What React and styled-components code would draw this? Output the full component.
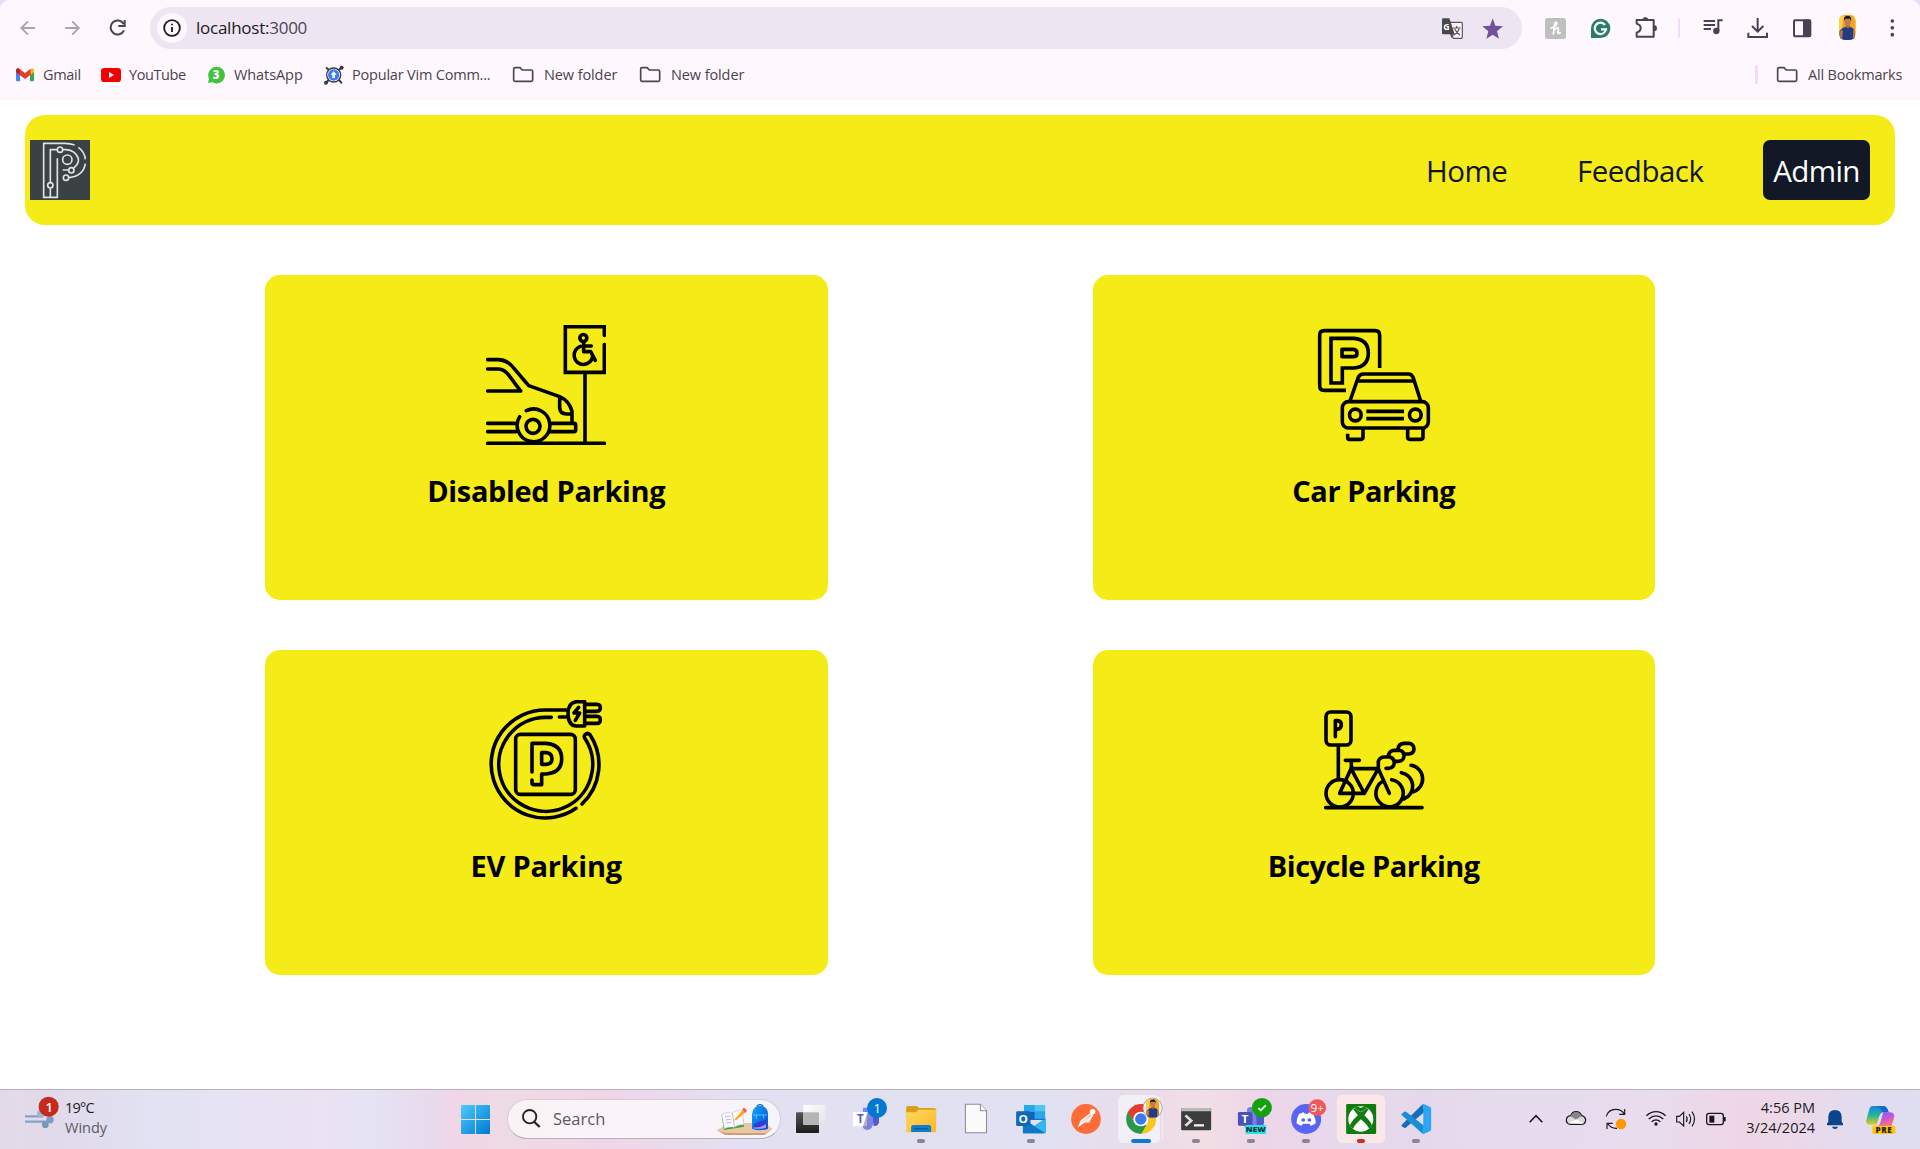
import React from 'react';
import styled, { createGlobalStyle } from 'styled-components';

const GlobalStyle = createGlobalStyle`
  *, *::before, *::after { box-sizing: border-box; }
  html, body { margin: 0; padding: 0; background: #fff; }
  body {
    font-family: "Open Sans", "Noto Sans", sans-serif;
    color: #000;
    overflow: hidden;
  }
  svg { display: block; flex: none; }
  svg text { font-family: "Open Sans", "Noto Sans", sans-serif; }
`;

const Screen = styled.div`
  width: 1920px;
  height: 1149px;
  display: flex;
  flex-direction: column;
`;

/* ---------- Browser chrome ---------- */

const Browser = styled.header`
  flex: none;
  height: 100px;
  background: #ecdaf8;
`;

const BrowserSurface = styled.div`
  height: 100%;
  background: #fef7fd;
  border-radius: 9px 9px 0 0;
`;

const Toolbar = styled.div`
  height: 56px;
  display: flex;
  align-items: center;
  padding-left: 5px;
`;

const AddressBar = styled.div`
  flex: none;
  width: 1372px;
  height: 42px;
  margin: 0 11px 0 10px;
  padding: 0 10px 0 7px;
  display: flex;
  align-items: center;
  border-radius: 21px;
  background: #ede5f2;
`;

const SiteInfo = styled.div`
  width: 30px;
  height: 30px;
  border-radius: 50%;
  background: #fef7fd;
  display: grid;
  place-items: center;
`;

const Address = styled.div`
  flex: 1;
  padding-left: 9px;
  font-size: 17px;
  letter-spacing: -0.25px;
  line-height: 24px;
  color: #4d4554;
  span { color: #1e1a22; }
`;

const BookmarksBar = styled.nav`
  height: 37px;
  display: flex;
  align-items: center;
  padding: 0 18px 0 12px;
`;

const Bookmark = styled.div`
  flex: none;
  width: ${(p) => p.$width}px;
  display: flex;
  align-items: center;
  font-size: 14.5px;
  letter-spacing: ${(p) => p.$track || 0}px;
  line-height: 20px;
  color: #4a434e;
  white-space: nowrap;
`;

const BookmarkDivider = styled.div`
  width: 3px;
  height: 19px;
  margin: 0 15px 0 auto;
  border-radius: 2px;
  background: #f0dbff;
`;

/* ---------- Page ---------- */

const Page = styled.main`
  flex: 1;
  padding: 15px 25px 0;
`;

const Navbar = styled.nav`
  height: 110px;
  display: flex;
  align-items: center;
  justify-content: space-between;
  padding: 0 25px 0 5px;
  border-radius: 20px;
  background: #f5eb17;
`;

const NavLinks = styled.div`
  display: flex;
  align-items: center;
`;

const NavLink = styled.a`
  width: ${(p) => p.$width}px;
  padding: 1px 0 0 1px;
  font-size: 29.5px;
  letter-spacing: -0.5px;
  line-height: 45px;
  color: #101521;
`;

const AdminButton = styled.button`
  width: 107px;
  height: 60px;
  padding: 1px 0 0;
  border: 0;
  border-radius: 7px;
  background: #121826;
  color: #fff;
  font: inherit;
  font-size: 29.5px;
  letter-spacing: -0.6px;
  line-height: 45px;
`;

const CardGrid = styled.section`
  display: grid;
  grid-template-columns: 562.5px 562.5px;
  grid-auto-rows: 325px;
  gap: 50px 265px;
  justify-content: center;
  padding-top: 50px;
`;

const Card = styled.article`
  display: flex;
  flex-direction: column;
  align-items: center;
  padding-top: 50px;
  border-radius: 15px;
  background: #f5eb17;
`;

const CardTitle = styled.h2`
  margin: 23px 0 0;
  font-size: 29px;
  font-weight: 700;
  letter-spacing: ${(p) => p.$track}px;
  line-height: 45px;
`;

const LineArt = styled.svg`
  fill: none;
  stroke: #000;
  stroke-width: 10.8;
  stroke-linecap: round;
  stroke-linejoin: round;
`;

/* ---------- Taskbar ---------- */

const Taskbar = styled.footer`
  flex: none;
  height: 60px;
  display: flex;
  align-items: stretch;
  border-top: 1px solid #b5b0be;
  background: linear-gradient(90deg, #e3dae9 0, #e1daea 60px, #e1e2f3 150px, #e7e3f4 250px, #ebe2f3 320px,
    #e5e3f4 370px, #e7dbed 430px, #f0d6e8 455px, #eedae4 500px, #efd6e8 610px, #e3e0f1 730px, #e0e1f2 1050px,
    #ecdbe9 1150px, #f2dfe5 1200px, #ecd5e9 1265px, #e7d8eb 1340px, #e6d8ec 1430px, #e6dced 1500px, #e8dced 1660px,
    #efd6e6 1745px, #e9d9ea 1810px, #e1ddf0 1870px, #e0def1 1920px);
`;

const Weather = styled.div`
  flex: none;
  width: 446px;
  display: flex;
  padding-left: 20px;
`;

const TwoLines = styled.div`
  padding-top: 8px;
  font-size: 14.5px;
  line-height: 20px;
  text-align: ${(p) => p.$align || 'left'};
  color: #1c1a1e;
  white-space: nowrap;
`;

const Temperature = styled.div`
  letter-spacing: -0.8px;
`;

const Muted = styled.div`
  color: #5d5a62;
`;

const SearchBox = styled.div`
  flex: none;
  width: 274px;
  height: 40px;
  margin: 9px 2px 0 0;
  display: flex;
  align-items: center;
  border: 1px solid #d9cbd8;
  border-bottom-color: #b8adba;
  border-radius: 20px;
  background: linear-gradient(90deg, #faf3f6, #faf4f9 60%, #f6f4fb);
  font-size: 16.5px;
  color: #5c585e;
  span { flex: 1; padding-bottom: 1px; }
`;

const AppSlot = styled.div`
  flex: none;
  position: relative;
  width: 55px;
  height: 59px;
`;

const ActiveTile = styled.div`
  position: absolute;
  left: ${(p) => p.$left}px;
  top: 4px;
  width: ${(p) => p.$width}px;
  height: 50px;
  border: 1px solid #e6dbe8;
  border-radius: 6px;
  background: ${(p) => p.$color};
`;

const AppIcon = styled.svg`
  position: relative;
`;

const Tray = styled.div`
  flex: 1;
  display: flex;
  align-items: stretch;
  justify-content: flex-end;
`;

const Clock = styled(TwoLines)`
  flex: none;
  width: 85px;
`;

/* ---------- Toolbar icons ---------- */

const ink = '#4c4152';

function ToolIcon({ box, width = 45, height = 56, children }) {
  return <svg width={width} height={height} viewBox={box}>{children}</svg>;
}

function BackForward({ forward }) {
  return (
    <ToolIcon box="15 0 135 168">
      <path transform={forward ? 'translate(165.5 0) scale(-1 1)' : undefined} d="M105 84H64M84 64L64 84L84 104" fill="none" stroke="#aaa3ad" strokeWidth="5.5" />
    </ToolIcon>
  );
}

function Reload() {
  return (
    <ToolIcon box="285 0 135 168">
      <path d="M371 72A21 21 0 1 0 372 91" fill="none" stroke={ink} strokeWidth="6" />
      <path d="M374 60V78H355" fill="none" stroke={ink} strokeWidth="6" />
    </ToolIcon>
  );
}

function Info() {
  return (
    <svg width="18" height="18" viewBox="0 0 54 54">
      <circle cx="27" cy="27" r="23.5" fill="none" stroke="#1e1a22" strokeWidth="5.5" />
      <path d="M27 24V39M27 14V19" stroke="#1e1a22" strokeWidth="5.5" />
    </svg>
  );
}

function Translate() {
  return (
    <ToolIcon box="96 27 120 114" width={40} height={38}>
      <path d="M142 67H184Q187 67 187 70V112Q187 115 184 115H161L151 101" fill="#fef7fd" stroke="#58535b" strokeWidth="3.5" />
      <path d="M130 55H148L164 103H130Q126 103 126 99V59Q126 55 130 55Z" fill="#4a464d" />
      <text x="130" y="91" fontSize="26" fontWeight="700" fill="#fff">G</text>
      <path d="M158 84H182M170 78V84M164 87Q170 99 180 105M178 86Q173 99 161 106" fill="none" stroke="#58535b" strokeWidth="3.5" />
      <path d="M151 103H163L154 115Z" fill="#58535b" />
    </ToolIcon>
  );
}

function Star() {
  return (
    <ToolIcon box="216 27 120 114" width={40} height={38}>
      <path d="M278 55L286 77L309 79L291 94L297 116L278 104L259 116L265 94L247 79L270 77Z" fill="#71509a" />
    </ToolIcon>
  );
}

function Honey() {
  return (
    <ToolIcon box="399 0 135 168">
      <rect x="435" y="54" width="63" height="63" rx="8" fill="#bfbfbf" />
      <path d="M453 84Q469 80 471 70Q468 62 464 71L460 102M461 93Q470 81 475 84Q477 88 473 97Q473 103 481 98" fill="none" stroke="#fff" strokeWidth="5" strokeLinecap="round" strokeLinejoin="round" />
    </ToolIcon>
  );
}

function Grammarly() {
  return (
    <ToolIcon box="534 0 135 168">
      <path d="M573 114V86A29 29 0 1 1 602 114Z" fill="#2a7d6b" />
      <path d="M615 75A17 17 0 1 0 618 88H603" fill="none" stroke="#fff" strokeWidth="6.5" />
      <path d="M614 84L621 88L615 95" fill="#fff" />
    </ToolIcon>
  );
}

function Puzzle() {
  return (
    <ToolIcon box="669 0 135 168">
      <path d="M710 60H761V110H710V98Q722 94 722 84Q722 75 710 71Z" fill="none" stroke={ink} strokeWidth="6" strokeLinejoin="round" />
      <path d="M728 60A8 8 0 0 1 744 60ZM762 76A8 8 0 0 1 762 93Z" fill={ink} stroke={ink} strokeWidth="1" />
    </ToolIcon>
  );
}

function ToolbarSeparator() {
  return <ToolIcon box="804 0 66 168" width={22}><rect x="834" y="54" width="6" height="60" rx="3" fill="#f0dbff" /></ToolIcon>;
}

function Queue() {
  return (
    <ToolIcon box="870 0 135 168">
      <path d="M911 63H945M911 75H945M911 87H933M955 93V61H968" fill="none" stroke={ink} strokeWidth="6" />
      <circle cx="949" cy="93" r="9.5" fill={ink} />
    </ToolIcon>
  );
}

function Download() {
  return (
    <ToolIcon box="1005 0 135 168">
      <path d="M1073 54V94M1056 78L1073 95L1090 78M1045 98V111H1101V98" fill="none" stroke={ink} strokeWidth="6" />
    </ToolIcon>
  );
}

function SidePanel() {
  return (
    <ToolIcon box="1140 0 135 168">
      <rect x="1182" y="61" width="49" height="48" rx="3" fill="none" stroke={ink} strokeWidth="6" />
      <path d="M1209 59H1231V111H1209Z" fill={ink} />
    </ToolIcon>
  );
}

function Portrait({ id }) {
  return (
    <g>
      <clipPath id={id}><rect x="3" y="0" width="50" height="76" rx="18" /></clipPath>
      <g clipPath={`url(#${id})`}>
        <rect width="56" height="76" fill="#f2a51d" />
        <path d="M0 0H18L10 50H0ZM43 0H56V30Z" fill="#ffcf4a" />
        <path d="M5 76V49Q14 37 24 36H35Q48 38 50 54V76Z" fill="#203c83" />
        <path d="M5 48L15 47L12 76H5ZM45 46L51 52V76H45Z" fill="#b8714b" />
        <path d="M23 28H36V38Q30 43 23 38Z" fill="#a96745" />
        <ellipse cx="29" cy="20" rx="9" ry="14" fill="#bd7c56" />
        <path d="M18 19Q16 3 30 3Q42 4 39 20L36 12H22Z" fill="#161c27" />
      </g>
    </g>
  );
}

function Avatar() {
  return (
    <ToolIcon box="1275 0 135 168">
      <circle cx="1343" cy="83" r="38" fill="#fff" />
      <g transform="translate(1314 44)"><Portrait id="profilePhoto" /></g>
    </ToolIcon>
  );
}

function Dots() {
  return (
    <ToolIcon box="1410 0 135 168">
      <g fill={ink}><circle cx="1477" cy="63" r="5.5" /><circle cx="1477" cy="83.5" r="5.5" /><circle cx="1477" cy="104" r="5.5" /></g>
    </ToolIcon>
  );
}

/* ---------- Bookmark icons ---------- */

function GmailIcon() {
  return (
    <svg width="31" height="24" viewBox="36 189 93 72">
      <path d="M48 211V240Q48 244 52 244H60V217Z" fill="#4285f4" />
      <path d="M102 211V240Q102 244 98 244H90V217Z" fill="#34a853" />
      <path d="M90 210L93 206Q102 201 102 212V216L90 226Z" fill="#fbbc04" />
      <path d="M48 212Q49 201 58 206L75 219L92 206V224L75 237L58 224L48 216Z" fill="#e33e2f" />
      <path d="M48 212Q49 202 58 206L60 208V225L48 216Z" fill="#c5221f" />
    </svg>
  );
}

function YouTubeIcon() {
  return (
    <svg width="31" height="24" viewBox="294 189 93 72">
      <rect x="303" y="204" width="60" height="42" rx="10" fill="#f50000" />
      <path d="M327 216V234L342 225Z" fill="#fff" />
    </svg>
  );
}

function WhatsAppIcon() {
  return (
    <svg width="30" height="24" viewBox="612 189 90 72">
      <path d="M624 249L627 236A25 25 0 1 1 637 247Z" fill="#43c23c" />
      <text x="638" y="238" fontSize="34" fontWeight="800" fill="#fff">3</text>
    </svg>
  );
}

function VimIcon() {
  return (
    <svg width="32" height="24" viewBox="960 189 96 72">
      <path d="M978 248L1025 202M980 204L991 214M1024 248L1014 237" stroke="#353b43" strokeWidth="6" strokeLinecap="round" />
      <circle cx="1025" cy="203" r="6" fill="#353b43" /><circle cx="978" cy="248" r="6" fill="#353b43" />
      <circle cx="1001" cy="225" r="21" fill="#fff" stroke="#353b43" strokeWidth="4" />
      <circle cx="1001" cy="225" r="17" fill="#3f7df0" />
      <path d="M1001 214L1010 224H1005V234H997V224H992Z" fill="#fff" />
    </svg>
  );
}

function FolderIcon() {
  return (
    <svg width="35" height="24" viewBox="0 189 105 72">
      <path d="M18 203H33L40 210H67Q71 210 71 214V240Q71 244 67 244H18Q14 244 14 240V207Q14 203 18 203Z" fill="none" stroke="#4d454f" strokeWidth="5" />
    </svg>
  );
}

/* ---------- Page icons ---------- */

function Logo() {
  return (
    <svg width="60" height="60" viewBox="90 420 180 180">
      <path d="M90 420H270V600H90Z" fill="#3c4144" />
      <g fill="none" stroke="#dde3e5" strokeWidth="5">
        <path d="M224 435Q210 430 195 430H131V592H172V475" />
        <path d="M151 546V449H171M151 565V592M189 449H198Q226 451 235 475Q238 490 221 504" />
        <path d="M235 442Q254 455 256 478M256 491Q250 528 207 533M188 510H207" />
        <circle cx="180" cy="449" r="8" /><circle cx="202" cy="479" r="14" />
        <circle cx="214" cy="511" r="8" /><circle cx="198" cy="533" r="8" /><circle cx="151" cy="556" r="8" />
      </g>
    </svg>
  );
}

function DisabledParkingIcon() {
  return (
    <LineArt width="120" height="120" viewBox="78 75 360 360">
      <path d="M83 179H115Q143 180 162 205L206 257L299 290Q328 303 336 334V366M83 207H116Q133 208 145 224L182 273H83M299 292V323Q300 342 320 342H335" />
      <path d="M83 370H165M275 370H342Q347 370 347 375V390Q347 395 342 395H270M83 395H168M83 430H433M375 220V428" />
      <path d="M199 332A49 49 0 1 1 179 350" />
      <circle cx="219" cy="379" r="21" />
      <path d="M433 106V80H316V217H433V134" strokeLinejoin="miter" />
      <circle cx="370" cy="114" r="10.5" />
      <path d="M361 139A28 28 0 1 0 398 170M371 129V155H392L406 181M371 138H394" />
    </LineArt>
  );
}

const SquareCaps = styled.g`
  stroke-linecap: butt;
`;

function CarParkingIcon() {
  return (
    <LineArt width="120" height="120" viewBox="132 75 360 360">
      <SquareCaps>
        <path d="M329 204V106Q329 92 315 92H163Q149 92 149 106V257Q149 271 163 271H228" />
        <path d="M183 115H252Q295 119 295 159Q295 200 252 204H217V249H183Z" strokeLinejoin="miter" />
        <path d="M216 148H250Q261 149 261 159.5Q261 170 250 170H216Z" />
        <path d="M239 306L264 234Q269 222 280 222H415Q426 222 430 234L453 306M264 243H430" />
        <rect x="217" y="305" width="258" height="79" rx="18" />
        <circle cx="256" cy="345" r="17.5" /><circle cx="436" cy="345" r="17.5" />
        <path d="M289 334H402M289 356H402" />
        <path d="M233 401V413Q233 418 238 418H273Q279 418 279 412V384M413 384V412Q413 418 419 418H453Q459 418 459 412V384" />
      </SquareCaps>
    </LineArt>
  );
}

function EvParkingIcon() {
  return (
    <LineArt width="120" height="120" viewBox="109 60 360 360">
      <path d="M352 90H287A162 162 0 1 0 379 385M397 372A163 163 0 0 0 421 164Q414 157 406 164Q402 168 405 174A141 141 0 1 1 287 112H305M329 111H350" />
      <rect x="198" y="163" width="179" height="180" rx="14" />
      <path d="M247 276V190H289Q336 194 336 236Q336 279 289 282H276V314H252Q247 314 247 309V300" />
      <path d="M276 218V253H289Q307 252 307 236Q307 219 289 218Z" />
      <path d="M405 65H380Q355 68 355 101Q356 138 380 138H405ZM411 73H442Q452 74 452 83Q452 93 442 94H411M411 109H442Q452 110 452 119Q452 130 442 130H411" />
      <path d="M387 82L373 99H390L377 121" />
    </LineArt>
  );
}

function BicycleParkingIcon() {
  return (
    <LineArt width="120" height="120" viewBox="162 60 360 360">
      <rect x="198" y="96" width="75" height="99" rx="14" />
      <path d="M226 170V122H232Q244 123 244 134Q244 146 232 148H228" />
      <path d="M235 198V296M256 241H298M274 243V265M197 383H486" />
      <circle cx="239" cy="340" r="41" />
      <path d="M239 340H313L355 266H273ZM273 266L313 340M355 266L388 340M370 303A41 41 0 1 0 395 299" />
      <path d="M355 266V244Q359 231 374 231H390Q402 235 403 247Q402 263 387 265H378M384 230Q387 213 402 211H419Q432 214 432 228Q431 243 415 244H403M413 210Q415 191 431 190H447Q461 192 462 207Q461 221 446 222H430" />
      <path d="M424 278A41 41 0 0 1 431 357M453 256A41 41 0 0 1 458 336" />
    </LineArt>
  );
}

/* ---------- Taskbar icons ---------- */

function WeatherIcon() {
  return (
    <svg width="45" height="59" viewBox="60 30 135 177">
      <g stroke="#83a3c5" strokeWidth="7" fill="none"><path d="M75 109H128M75 125H142" /></g>
      <circle cx="123" cy="101" r="12" fill="#9cb7d3" /><circle cx="150" cy="119" r="11" fill="#7b9dc1" /><circle cx="136" cy="134" r="10" fill="#7598be" />
      <circle cx="146" cy="80" r="30" fill="#c52b1d" />
      <text x="148" y="95" fontSize="39" fontWeight="600" textAnchor="middle" fill="#fff">1</text>
    </svg>
  );
}

function StartIcon() {
  return (
    <svg width="61" height="59" viewBox="18 30 183 177">
      <defs><linearGradient id="start" x1="0" y1="0" x2="1" y2="1"><stop stopColor="#4cccfb" /><stop offset="1" stopColor="#0078d4" /></linearGradient></defs>
      <path d="M66 75H105V117H63V78Q63 75 66 75ZM108 75H147Q150 75 150 78V117H108ZM63 120H105V162H66Q63 162 63 159ZM108 120H150V159Q150 162 147 162H108Z" fill="url(#start)" />
    </svg>
  );
}

function SearchGlyph() {
  return (
    <svg width="45" height="38" viewBox="204 63 135 114">
      <circle cx="269" cy="113" r="20" fill="none" stroke="#242124" strokeWidth="5.5" />
      <path d="M283 129L299 144" stroke="#242124" strokeWidth="7" />
    </svg>
  );
}

function SearchArt() {
  return (
    <svg width="68" height="38" viewBox="819 63 204 114">
      <defs><linearGradient id="bag" x1="0" y1="0" x2="1" y2="1"><stop stopColor="#10a7ff" /><stop offset="1" stopColor="#064bd0" /></linearGradient></defs>
      <path d="M833 153L874 132H980L1001 150L976 163H862Z" fill="#e9c8a0" /><path d="M833 153L862 162H978L1001 150L976 168H858Z" fill="#cba079" />
      <path d="M848 109L855 153L915 143L909 98Z" fill="#3d9c45" />
      <path d="M848 106Q870 96 880 103Q890 92 910 96L915 137Q897 136 887 145Q872 141 856 149Z" fill="#fafafa" stroke="#b7aebc" strokeWidth="1.5" />
      <path d="M880 103L887 145M858 114L875 111M860 123L877 120M861 132L878 129" stroke="#9e9bb1" strokeWidth="2" />
      <path d="M883 125L912 92L921 99L893 122Z" fill="#fea52b" /><path d="M909 91L915 86L924 94L919 101Z" fill="#f45b59" />
      <path d="M954 83Q955 77 963 77Q971 77 972 83" fill="none" stroke="#0964c9" strokeWidth="4" />
      <path d="M939 105Q943 80 963 80Q985 81 987 104V149Q963 158 939 149Z" fill="url(#bag)" />
      <path d="M942 108H984M952 108V119M974 108V119" stroke="#66ccff" strokeWidth="2.5" />
      <path d="M944 137Q953 128 981 123V145Q962 151 944 145Z" fill="#2c3fd1" /><path d="M944 145Q962 148 981 135V146Q962 152 944 148Z" fill="#b78bff" />
    </svg>
  );
}

function AppGlyph({ x, span = 154, children }) {
  return <AppIcon width="55" height="59" viewBox={`${x} 30 ${span} 177`} preserveAspectRatio="none">{children}</AppIcon>;
}

function Running({ x, color = '#8b8590', width = 23 }) {
  return <rect x={x - width / 2} y="177" width={width} height="12" rx="6" fill={color} />;
}

function TaskViewIcon() {
  return (
    <AppGlyph x="1032" span={165}>
      <defs>
        <linearGradient id="tvDark" x1="0" y1="0" x2="0" y2="1"><stop stopColor="#555" /><stop offset="1" stopColor="#1c1c1c" /></linearGradient>
        <linearGradient id="tvLight" x1="0" y1="0" x2="1" y2="1"><stop stopColor="#fff" /><stop offset="1" stopColor="#e4e1e4" /></linearGradient>
      </defs>
      <rect x="1071" y="97" width="69" height="62" rx="2" fill="url(#tvDark)" />
      <rect x="1093" y="75" width="67" height="60" rx="2" fill="url(#tvLight)" />
      <path d="M1093 97H1140V135H1093Z" fill="#b6b4b6" />
    </AppGlyph>
  );
}

function TeamsIcon() {
  return (
    <AppGlyph x="1197" span={165}>
      <path d="M1298 100H1320V127Q1318 139 1304 138Z" fill="#5059c9" /><path d="M1272 83H1302V133Q1298 150 1285 150Q1272 148 1270 138Z" fill="#7b83eb" />
      <rect x="1242" y="96" width="43" height="43" fill="#fff" />
      <path d="M1285 98L1288 140H1272Z" fill="#4e5078" opacity=".45" />
      <text x="1264" y="130" fontSize="35" fontWeight="700" textAnchor="middle" fill="#5059c9">T</text>
      <circle cx="1314" cy="84" r="30" fill="#0078d4" />
      <text x="1315" y="99" fontSize="39" textAnchor="middle" fill="#fff">1</text>
    </AppGlyph>
  );
}

function ExplorerIcon() {
  return (
    <AppGlyph x="-16.8">
      <defs><linearGradient id="folder" x1="0" y1="0" x2="1" y2="1"><stop stopColor="#ffda61" /><stop offset="1" stopColor="#f8b728" /></linearGradient></defs>
      <path d="M20 83Q20 78 25 78H49L56 84H98Q104 84 104 90V115H20Z" fill="#dba012" />
      <path d="M20 97H47L55 89H104V153Q104 157 100 157H20Z" fill="url(#folder)" />
      <path d="M34 156V141Q34 135 40 135H84Q90 135 90 141V156Z" fill="#0f7dcb" /><path d="M43 146H81" stroke="#0b5795" strokeWidth="3.5" />
      <Running x={61.5} />
    </AppGlyph>
  );
}

function FileIcon() {
  return (
    <AppGlyph x="137.2">
      <path d="M186 73H228L245 92V158H186Z" fill="#fafafa" stroke="#918c96" strokeWidth="3" /><path d="M228 73V92H245" fill="#fff" stroke="#918c96" strokeWidth="3" />
    </AppGlyph>
  );
}

function OutlookIcon() {
  return (
    <AppGlyph x="291.2">
      <path d="M350 75H409V120H350Z" fill="#1b6fc1" />
      <path d="M350 75H379V96H350ZM379 96H409V116H379Z" fill="#28a8e8" /><path d="M379 75H409V95H379Z" fill="#4dc7f5" /><path d="M350 96H379V117H350Z" fill="#0f63b3" />
      <path d="M347 117L379 138L411 115V157Q411 160 406 160H347Z" fill="#198ad8" /><path d="M347 159L411 117V160Z" fill="#35b8f1" /><path d="M347 117L408 158L402 160H347Z" fill="#1178c8" />
      <rect x="328" y="94" width="40" height="44" rx="4" fill="#0f67b8" />
      <text x="348" y="129" fontSize="33" fontWeight="700" textAnchor="middle" fill="#fff">O</text>
      <Running x={369.5} />
    </AppGlyph>
  );
}

function PostmanIcon() {
  return (
    <AppGlyph x="445.2">
      <ellipse cx="523.5" cy="117" rx="41.5" ry="45" fill="#fe6c37" />
      <circle cx="542" cy="95" r="8" fill="#fff" />
      <path d="M537 98L544 105L533 127L518 129L500 143L509 121Z" fill="#fff" /><path d="M537 103L511 128M537 105L518 130" stroke="#e8734a" strokeWidth="1.5" />
    </AppGlyph>
  );
}

function ChromeIcon() {
  return (
    <AppGlyph x="599.2">
      <clipPath id="chromeClip"><ellipse cx="678" cy="117" rx="42" ry="45" /></clipPath>
      <g clipPath="url(#chromeClip)">
        <path d="M630 70H725V98H678L660 128L636 92Z" fill="#e33b2e" />
        <path d="M636 88L660 129Q668 139 680 137L696 134L676 166H630Z" fill="#279a49" />
        <path d="M678 98H725V170H675L697 127Q701 112 690 98Z" fill="#fcc61d" />
      </g>
      <ellipse cx="677" cy="117" rx="21" ry="22" fill="#fff" /><ellipse cx="677" cy="117" rx="16" ry="17.5" fill="#3a79ea" />
      <ellipse cx="710" cy="84" rx="27" ry="30" fill="#f6f3f6" stroke="#92867f" strokeWidth="2" />
      <g transform="translate(690 56) scale(.72 .75)"><Portrait id="profileBadge" /></g>
      <Running x={678} width={56} color="#0a78d4" />
    </AppGlyph>
  );
}

function TerminalIcon() {
  return (
    <AppGlyph x="753.2">
      <rect x="790" y="84" width="84" height="67" rx="4" fill="#3d3d3d" /><path d="M790 94V88Q790 84 794 84H870Q874 84 874 88V94Z" fill="#b9b9b9" />
      <path d="M802 106L818 122L802 137" fill="none" stroke="#ddd" strokeWidth="8" /><path d="M826 136H854" stroke="#eee" strokeWidth="7" />
      <Running x={831.5} />
    </AppGlyph>
  );
}

function TeamsNewIcon() {
  return (
    <AppGlyph x="907.2">
      <path d="M965 101H1004V148H980Q965 145 965 125Z" fill="#7a7fe4" /><path d="M1000 108H1022V129Q1020 142 1002 142Z" fill="#5059c9" />
      <circle cx="985" cy="92" r="11" fill="#777de3" />
      <path d="M988 101V137" stroke="#3b419c" strokeWidth="3" />
      <rect x="949" y="96" width="39" height="41" rx="4" fill="#4851b8" />
      <text x="968.5" y="128" fontSize="33" fontWeight="700" textAnchor="middle" fill="#fff">T</text>
      <ellipse cx="1016" cy="83" rx="28" ry="29" fill="#13a10e" /><path d="M1006 84L1013 91L1027 76" fill="none" stroke="#fff" strokeWidth="5" />
      <rect x="970" y="135" width="58" height="27" rx="3" fill="#23e5e5" />
      <text x="999" y="157" fontSize="23" fontWeight="800" textAnchor="middle" fill="#092f32">NEW</text>
      <Running x={985.5} />
    </AppGlyph>
  );
}

function DiscordIcon() {
  return (
    <AppGlyph x="1061.2">
      <ellipse cx="1140" cy="117" rx="42" ry="45" fill="#5865f2" />
      <path d="M1120 102L1133 97L1136 101H1145L1149 97L1160 102Q1167 116 1167 130Q1160 135 1153 137L1149 131H1131L1127 137Q1119 135 1113 130Q1113 114 1120 102Z" fill="#fff" />
      <circle cx="1132" cy="120" r="5.5" fill="#5865f2" /><circle cx="1149" cy="120" r="5.5" fill="#5865f2" />
      <circle cx="1171" cy="83" r="25" fill="#f0595b" />
      <text x="1171" y="95" fontSize="33" textAnchor="middle" fill="#fff">9+</text>
      <Running x={1139.5} />
    </AppGlyph>
  );
}

function XboxIcon() {
  return (
    <AppGlyph x="1215.2">
      <rect x="1252" y="72" width="84" height="90" rx="4" fill="#107c10" />
      <clipPath id="xbox"><ellipse cx="1293" cy="117" rx="35" ry="38" /></clipPath>
      <g clipPath="url(#xbox)"><rect x="1255" y="75" width="78" height="84" fill="#fff" />
        <path d="M1269 83Q1279 85 1293 97Q1308 85 1318 83L1303 106Q1324 127 1329 148L1319 151Q1311 133 1293 118Q1277 133 1268 151L1258 148Q1263 126 1285 106Z" fill="#107c10" />
        <path d="M1271 82Q1282 78 1293 84Q1304 78 1315 82L1293 96Z" fill="#107c10" />
      </g>
      <Running x={1293.5} color="#cf2c22" />
    </AppGlyph>
  );
}

function CodeIcon() {
  return (
    <AppGlyph x="1369.2">
      <path d="M1408 134L1466 73L1471 96L1418 144Q1414 145 1408 139Q1405 136 1408 134Z" fill="#146eb8" />
      <path d="M1408 101L1415 95Q1417 93 1421 96L1471 138L1466 161L1408 106Q1405 103 1408 101Z" fill="#1990d6" />
      <path d="M1462 76L1469 72L1486 80Q1490 82 1490 86V148Q1490 152 1486 154L1469 162L1462 158Q1468 158 1468 151V83Q1468 75 1462 76Z" fill="#2aa6f2" />
      <Running x={1447.5} />
    </AppGlyph>
  );
}

function TrayIcon({ x, width, children }) {
  return <svg width={width} height="59" viewBox={`${x} 30 ${width * 3} 177`} fill="none" stroke="#1b191d" strokeWidth="4">{children}</svg>;
}

function CloudShape() {
  return (
    <TrayIcon x={228} width={40}>
      <path d="M272 133Q259 132 259 120Q260 108 272 107Q277 95 288 95Q300 95 305 107Q317 110 317 122Q315 133 304 133Z" fill="#d9d9d9" />
      <path d="M272 108Q277 96 288 96Q300 96 304 108L288 119Z" fill="#858585" stroke="none" />
      <path d="M262 130L290 118L312 131Z" fill="#fafafa" stroke="none" />
    </TrayIcon>
  );
}

function SyncIcon() {
  return (
    <TrayIcon x={348} width={40}>
      <path d="M379 109Q385 88 407 88Q425 88 433 102M434 87V103H418M381 147V130H398M384 132Q393 146 411 145" strokeWidth="3.5" />
      <circle cx="423" cy="132" r="15.5" fill="#ff9800" stroke="none" />
    </TrayIcon>
  );
}

function WifiIcon() {
  return (
    <TrayIcon x={468} width={40}>
      <path d="M499 107Q528 83 557 107M506 117Q528 98 550 117M515 125Q528 114 541 125" />
      <circle cx="528" cy="132" r="5" fill="#1b191d" stroke="none" />
    </TrayIcon>
  );
}

function SpeakerIcon() {
  return (
    <TrayIcon x={588} width={30}>
      <path d="M590 109H598L611 97V138L598 126H590ZM619 109Q624 117 619 126M627 102Q637 117 627 132M636 95Q651 117 636 139" strokeWidth="3.5" />
    </TrayIcon>
  );
}

function BatteryIcon() {
  return (
    <TrayIcon x={678} width={24}>
      <rect x="680" y="100" width="50" height="34" rx="7" /><path d="M688 107H703V128H688Z" fill="#1b191d" stroke="none" /><path d="M734 111V124" strokeWidth="6" />
    </TrayIcon>
  );
}

function BellIcon() {
  return (
    <TrayIcon x={1005} width={45}>
      <path d="M1041 136V130L1045 126V109Q1047 90 1065 90Q1083 90 1085 109V126L1089 130V136ZM1056 140H1074Q1072 147 1065 147Q1058 147 1056 140Z" fill="#0a438e" stroke="none" />
    </TrayIcon>
  );
}

function CopilotIcon() {
  return (
    <TrayIcon x={1140} width={60}>
      <defs>
        <linearGradient id="copA" x1="0" y1="0" x2="0" y2="1"><stop stopColor="#1682de" /><stop offset=".5" stopColor="#25b49a" /><stop offset="1" stopColor="#ecca19" /></linearGradient>
        <linearGradient id="copB" x1="0" y1="0" x2=".4" y2="1"><stop stopColor="#755cf0" /><stop offset=".5" stopColor="#c457d9" /><stop offset="1" stopColor="#f8727e" /></linearGradient>
      </defs>
      <g stroke="none">
        <path d="M1178 78H1213Q1221 80 1226 97H1210Q1202 98 1198 109L1190 134H1167Q1156 133 1159 119L1169 85Q1172 78 1178 78Z" fill="url(#copA)" />
        <path d="M1190 78H1213Q1221 80 1226 97H1207Q1201 81 1190 78Z" fill="#1764d2" />
        <path d="M1210 97H1231Q1246 99 1242 114L1234 140H1192Q1199 137 1202 124Z" fill="url(#copB)" />
        <rect x="1177" y="137" width="69" height="25" rx="5" fill="#fdc60b" />
        <text x="1212" y="158" fontSize="24" fontWeight="800" textAnchor="middle" letterSpacing="2" fill="#23222d">PRE</text>
      </g>
    </TrayIcon>
  );
}

const parkingTypes = [
  { title: 'Disabled Parking', Icon: DisabledParkingIcon, track: -0.35 },
  { title: 'Car Parking', Icon: CarParkingIcon, track: -0.45 },
  { title: 'EV Parking', Icon: EvParkingIcon, track: -0.25 },
  { title: 'Bicycle Parking', Icon: BicycleParkingIcon, track: -0.5 },
];

const taskbarApps = [
  { Icon: TaskViewIcon },
  { Icon: TeamsIcon },
  { Icon: ExplorerIcon },
  { Icon: FileIcon },
  { Icon: OutlookIcon },
  { Icon: PostmanIcon },
  { Icon: ChromeIcon, tiles: [{ left: 16, width: 36, color: '#f1e2ee' }, { left: 4, width: 44, color: '#f3eff7' }] },
  { Icon: TerminalIcon },
  { Icon: TeamsNewIcon },
  { Icon: DiscordIcon },
  { Icon: XboxIcon, tiles: [{ left: 3, width: 50, color: '#fbe6e8' }] },
  { Icon: CodeIcon },
];

export default function App() {
  return (
    <Screen>
      <GlobalStyle />
      <Browser>
        <BrowserSurface>
          <Toolbar>
            <BackForward />
            <BackForward forward />
            <Reload />
            <AddressBar>
              <SiteInfo><Info /></SiteInfo>
              <Address><span>localhost:</span>3000</Address>
              <Translate />
              <Star />
            </AddressBar>
            <Honey />
            <Grammarly />
            <Puzzle />
            <ToolbarSeparator />
            <Queue />
            <Download />
            <SidePanel />
            <Avatar />
            <Dots />
          </Toolbar>
          <BookmarksBar>
            <Bookmark $width={86} $track={-0.3}><GmailIcon />Gmail</Bookmark>
            <Bookmark $width={106} $track={-0.4}><YouTubeIcon />YouTube</Bookmark>
            <Bookmark $width={116} $track={-0.08}><WhatsAppIcon />WhatsApp</Bookmark>
            <Bookmark $width={189} $track={-0.2}><VimIcon />Popular Vim Comm...</Bookmark>
            <Bookmark $width={127} $track={-0.1}><FolderIcon />New folder</Bookmark>
            <Bookmark $width={127} $track={-0.1}><FolderIcon />New folder</Bookmark>
            <BookmarkDivider />
            <Bookmark $width={129} $track={-0.18}><FolderIcon />All Bookmarks</Bookmark>
          </BookmarksBar>
        </BrowserSurface>
      </Browser>

      <Page>
        <Navbar>
          <Logo />
          <NavLinks>
            <NavLink $width={151}>Home</NavLink>
            <NavLink $width={187}>Feedback</NavLink>
            <AdminButton>Admin</AdminButton>
          </NavLinks>
        </Navbar>
        <CardGrid>
          {parkingTypes.map(({ title, Icon, track }) => (
            <Card key={title}>
              <Icon />
              <CardTitle $track={track}>{title}</CardTitle>
            </Card>
          ))}
        </CardGrid>
      </Page>

      <Taskbar>
        <Weather>
          <WeatherIcon />
          <TwoLines>
            <Temperature>19°C</Temperature>
            <Muted>Windy</Muted>
          </TwoLines>
        </Weather>
        <StartIcon />
        <SearchBox>
          <SearchGlyph />
          <span>Search</span>
          <SearchArt />
        </SearchBox>
        {taskbarApps.map(({ Icon, tiles = [] }, i) => (
          <AppSlot key={i}>
            {tiles.map((tile) => (
              <ActiveTile key={tile.left} $left={tile.left} $width={tile.width} $color={tile.color} />
            ))}
            <Icon />
          </AppSlot>
        ))}
        <Tray>
          <TrayIcon x={108} width={40}><path d="M149 127L168 107L187 127" strokeWidth="4.5" /></TrayIcon>
          <CloudShape />
          <SyncIcon />
          <WifiIcon />
          <SpeakerIcon />
          <BatteryIcon />
          <Clock $align="right">
            <div>4:56 PM</div>
            <div>3/24/2024</div>
          </Clock>
          <BellIcon />
          <CopilotIcon />
        </Tray>
      </Taskbar>
    </Screen>
  );
}
